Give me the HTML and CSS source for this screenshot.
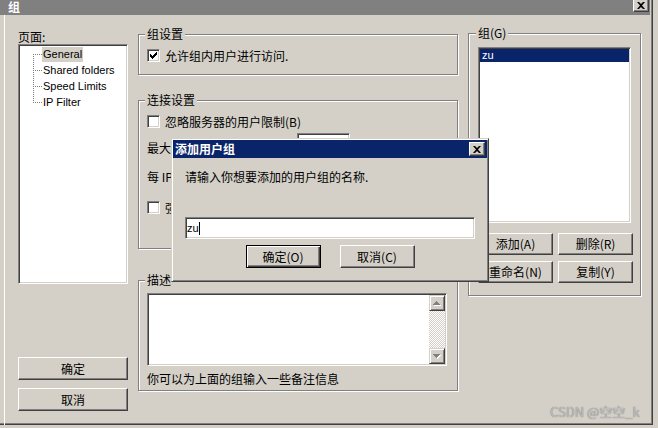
FILE: index.html
```html
<!DOCTYPE html>
<html lang="zh-CN">
<head>
<meta charset="utf-8">
<title>组</title>
<link rel="stylesheet" href="styles.css">
</head>
<body>
<div class="window">
  <div class="titlebar">
    <span class="title">组</span>
    <span class="cap-btn"><svg class="xglyph" width="8" height="7" viewBox="0 0 8 7"><path d="M0 0h2l2 2 2-2h2L5 3.5 8 7H6L4 5 2 7H0l3-3.5z"/></svg></span>
  </div>
  <div class="client">
    <div class="col-left">
      <div class="lbl">页面:</div>
      <div class="tree field">
        <div class="node first"><span class="twig"></span><span class="nlabel sel">General</span></div>
        <div class="node"><span class="twig"></span><span class="nlabel">Shared folders</span></div>
        <div class="node"><span class="twig"></span><span class="nlabel">Speed Limits</span></div>
        <div class="node last"><span class="twig"></span><span class="nlabel">IP Filter</span></div>
      </div>
      <button class="btn wide ok">确定</button>
      <button class="btn wide cancel">取消</button>
    </div>

    <div class="col-mid">
      <div class="group g1">
        <div class="legend">组设置</div>
        <div class="crow"><span class="chk"><svg width="11" height="11" viewBox="0 0 11 11" shape-rendering="crispEdges"><path d="M2 4h1v3H2z M3 5h1v3H3z M4 6h1v3H4z M5 5h1v3H5z M6 4h1v3H6z M7 3h1v3H7z M8 2h1v3H8z"/></svg></span><span>允许组内用户进行访问.</span></div>
      </div>
      <div class="group g2">
        <div class="legend">连接设置</div>
        <div class="crow"><span class="chk"></span><span>忽略服务器的用户限制(B)</span></div>
        <div class="irow"><span class="ilabel">最大</span><span class="field numbox"></span></div>
        <div class="trow">每 IP</div>
        <div class="crow c3"><span class="chk"></span><span>强</span></div>
      </div>
      <div class="group g3">
        <div class="legend">描述</div>
        <div class="field memo">
          <div class="vscroll">
            <span class="sbtn"><svg width="8" height="5" viewBox="0 0 8 5" shape-rendering="crispEdges"><path fill="#fff" d="M4 1h1v1h1v1h1v1h1v1H1V4h1V3h1V2h1z"/><path fill="#808080" d="M3 0h1v1h1v1h1v1h1v1H0V3h1V2h1V1h1z"/></svg></span>
            <span class="sbtn"><svg width="8" height="5" viewBox="0 0 8 5" shape-rendering="crispEdges"><path fill="#fff" d="M1 1h7v1H7v1H6v1H5v1H4V4H3V3H2V2H1z"/><path fill="#808080" d="M0 0h7v1H6v1H5v1H4v1H3V3H2V2H1V1H0z"/></svg></span>
          </div>
        </div>
        <div class="note">你可以为上面的组输入一些备注信息</div>
      </div>
    </div>

    <div class="col-right">
      <div class="group gr">
        <div class="legend">组(G)</div>
        <div class="field list">
          <div class="litem">zu</div>
        </div>
        <div class="brow">
          <button class="btn sq">添加(A)</button>
          <button class="btn sq">删除(R)</button>
        </div>
        <div class="brow">
          <button class="btn sq">重命名(N)</button>
          <button class="btn sq">复制(Y)</button>
        </div>
      </div>
    </div>
  </div>

  <div class="dialog">
    <div class="dtitle">
      <span>添加用户组</span>
      <span class="cap-btn dclose"><svg class="xglyph" width="8" height="7" viewBox="0 0 8 7"><path d="M0 0h2l2 2 2-2h2L5 3.5 8 7H6L4 5 2 7H0l3-3.5z"/></svg></span>
    </div>
    <div class="dtext">请输入你想要添加的用户组的名称.</div>
    <div class="field dinput"><span>zu</span><span class="caret"></span></div>
    <div class="dbtns">
      <button class="btn dbtn default">确定(O)</button>
      <button class="btn dbtn">取消(C)</button>
    </div>
  </div>

  <div class="watermark">CSDN @空空_k</div>
</div>
</body>
</html>
```
FILE: styles.css
```css
* { box-sizing: border-box; }

body {
  margin: 0;
  background: #d4d0c8;
  font: 12px/12px "Noto Sans CJK SC", sans-serif;
  color: #000;
  overflow: hidden;
}

.window {
  position: relative;
  width: 653px;
  height: 425px;
  border-right: 1px solid #404040;
  border-bottom: 1px solid #404040;
  box-shadow: inset -1px -1px #808080;
}

.titlebar {
  height: 15px;
  margin-right: 2px;
  background: #808080;
  display: flex;
  justify-content: space-between;
  align-items: flex-start;
}

.title {
  color: #fff;
  font-weight: bold;
  font-size: 12px;
  line-height: 12px;
  padding: 1px 0 0 8px;
}

.cap-btn {
  width: 16px;
  height: 14px;
  margin-top: -2px;
  margin-right: 1px;
  background: #d4d0c8;
  border: 1px solid;
  border-color: #fff #404040 #404040 #fff;
  box-shadow: inset -1px -1px #808080;
  display: flex;
  align-items: center;
  justify-content: center;
  flex: none;
}

.xglyph { display: block; }

.client {
  display: flex;
  align-items: flex-start;
  height: 410px;
  margin-left: 4px;
  border-left: 1px solid #fff;
}

/* sunken field */
.field {
  background: #fff;
  border: 1px solid;
  border-color: #808080 #fff #fff #808080;
  box-shadow: inset 1px 1px #404040, inset -1px -1px #d4d0c8;
  padding: 1px;
}

/* raised button */
.btn {
  display: flex;
  align-items: center;
  justify-content: center;
  background: #d4d0c8;
  border: 1px solid;
  border-color: #fff #404040 #404040 #fff;
  box-shadow: inset -1px -1px #808080;
  font: 12px/12px "Noto Sans CJK SC", sans-serif;
  color: #000;
  padding: 0;
  margin: 0;
}

/* left column */
.col-left {
  width: 110px;
  margin-left: 13px;
  display: flex;
  flex-direction: column;
}

.lbl { margin-top: 16px; }

.tree {
  margin-top: 1px;
  height: 240px;
  padding: 1px 1px 1px 14px;
}

.node {
  display: flex;
  align-items: center;
  height: 16px;
  font: 11px/13px "Liberation Sans", Arial, sans-serif;
}

.twig {
  flex: none;
  width: 9px;
  height: 16px;
  background:
    repeating-linear-gradient(90deg, #808080 0 1px, transparent 1px 2px) 0 8px / 9px 1px no-repeat,
    repeating-linear-gradient(180deg, #808080 0 1px, transparent 1px 2px) 0 0 / 1px 16px no-repeat;
}

.node.first .twig {
  background:
    repeating-linear-gradient(90deg, #808080 0 1px, transparent 1px 2px) 0 8px / 9px 1px no-repeat,
    repeating-linear-gradient(180deg, #808080 0 1px, transparent 1px 2px) 0 8px / 1px 8px no-repeat;
}

.node.last .twig {
  background:
    repeating-linear-gradient(90deg, #808080 0 1px, transparent 1px 2px) 0 8px / 9px 1px no-repeat,
    repeating-linear-gradient(180deg, #808080 0 1px, transparent 1px 2px) 0 0 / 1px 9px no-repeat;
}

.nlabel {
  padding: 1px 1px;
  line-height: 13px;
}

.nlabel.sel { background: #d4d0c8; }

.wide { width: 110px; height: 23px; }
.ok { margin-top: 73px; }
.cancel { margin-top: 8px; }

/* middle column */
.col-mid {
  width: 320px;
  margin-left: 10px;
}

.group {
  border: 1px solid #808080;
  box-shadow: inset 1px 1px #fff, 1px 1px #fff;
  padding: 0 8px;
}

.legend {
  width: fit-content;
  margin: -7px 0 0 -2px;
  padding: 0 2px;
  background: #d4d0c8;
  line-height: 12px;
}

.g1 { margin-top: 19px; height: 41px; }
.g2 { margin-top: 25px; height: 149px; }
.g3 { margin-top: 31px; height: 111px; }

.crow {
  display: flex;
  align-items: center;
  height: 13px;
  margin-top: 9px;
  line-height: 13px;
}

.crow.c3 { margin-top: 18px; }

.chk {
  flex: none;
  width: 13px;
  height: 13px;
  margin-right: 5px;
  background: #fff;
  border: 1px solid;
  border-color: #808080 #fff #fff #808080;
  box-shadow: inset 1px 1px #404040, inset -1px -1px #d4d0c8;
}

.chk svg { display: block; }

.irow {
  display: flex;
  align-items: flex-end;
  margin-top: 5px;
}

.ilabel { width: 150px; flex: none; }

.numbox { width: 53px; height: 21px; }

.trow { margin-top: 17px; }

.memo {
  margin-top: 7px;
  width: 300px;
  height: 73px;
  display: flex;
  justify-content: flex-end;
}

.vscroll {
  width: 16px;
  height: 100%;
  display: flex;
  flex-direction: column;
  justify-content: space-between;
  background: repeating-conic-gradient(#d4d0c8 0 25%, #fff 0 50%) 0 0 / 2px 2px;
}

.sbtn {
  width: 16px;
  height: 16px;
  background: #d4d0c8;
  border: 1px solid;
  border-color: #d4d0c8 #404040 #404040 #d4d0c8;
  box-shadow: inset 1px 1px #fff, inset -1px -1px #808080;
  display: flex;
  align-items: center;
  justify-content: center;
}

.sbtn svg { display: block; }

.note { margin-top: 7px; }

/* right column */
.col-right {
  width: 173px;
  margin-left: 10px;
}

.gr {
  margin-top: 18px;
  height: 263px;
  padding: 0 9px;
}

.list {
  margin-top: 8px;
  width: 153px;
  height: 176px;
}

.litem {
  height: 13px;
  background: #0a246a;
  color: #fff;
  font: 11px/13px "Liberation Sans", Arial, sans-serif;
  padding-left: 2px;
}

.brow {
  display: flex;
  gap: 5px;
  margin-top: 10px;
}

.brow + .brow { margin-top: 6px; }

.sq { width: 75px; height: 22px; flex: none; }

/* dialog */
.dialog {
  position: absolute;
  left: 171px;
  top: 138px;
  width: 318px;
  height: 144px;
  background: #d4d0c8;
  border: 1px solid;
  border-color: #d4d0c8 #404040 #404040 #d4d0c8;
  box-shadow: inset 1px 1px #fff, inset -1px -1px #808080;
  padding: 1px;
  display: flex;
  flex-direction: column;
}

.dtitle {
  height: 18px;
  background: #0a246a;
  color: #fff;
  font-weight: bold;
  display: flex;
  align-items: center;
  justify-content: space-between;
  padding: 0 2px;
}

.dclose { margin: 0; }

.dtext {
  margin-top: 13px;
  padding-left: 12px;
}

.dinput {
  margin: 34px 0 0 12px;
  width: 290px;
  height: 22px;
  display: flex;
  align-items: center;
  font: 11px/13px "Liberation Sans", Arial, sans-serif;
}

.caret {
  width: 1px;
  height: 13px;
  background: #000;
}

.dbtns {
  display: flex;
  justify-content: center;
  gap: 19px;
  margin-top: 6px;
}

.dbtn { width: 75px; height: 23px; }

.dbtn.default {
  border: 1px solid #000;
  box-shadow: inset 1px 1px #fff, inset -1px -1px #404040, inset -2px -2px #808080;
}

.watermark {
  position: absolute;
  left: 550px;
  top: 404px;
  font: 13px/16px "Noto Sans CJK SC", sans-serif;
  color: #bdbdbd;
  text-shadow: 0 0 1px #6a6a6a;
  white-space: nowrap;
}
```
